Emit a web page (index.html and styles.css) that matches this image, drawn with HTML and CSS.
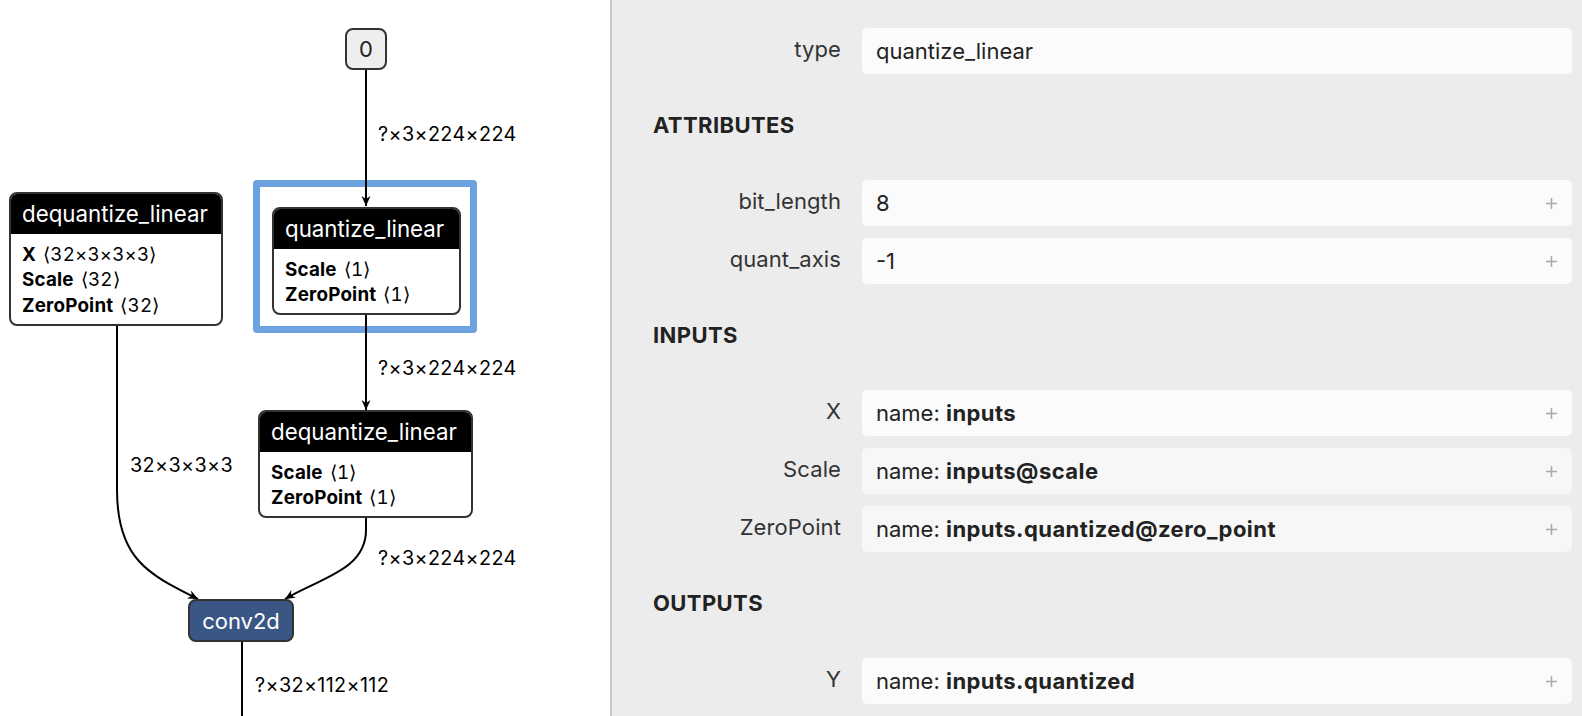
FILE: index.html
```html
<!DOCTYPE html>
<html>
<head>
<meta charset="utf-8">
<link rel="stylesheet" href="styles.css">
</head>
<body>
<div class="app">
  <div class="graph">
    <div class="selection"></div>
    <svg class="edges" width="610" height="716" viewBox="0 0 610 716">
      <defs>
        <marker id="arrow" viewBox="0 0 10 10" refX="10" refY="5" markerWidth="10" markerHeight="10" markerUnits="userSpaceOnUse" orient="auto">
          <path d="M0,0.5 L10,5 L0,9.5 L3,5 Z" fill="#000"/>
        </marker>
      </defs>
      <path class="edge" d="M366,70 L366,206" marker-end="url(#arrow)"/>
      <path class="edge" d="M366,313 L366,410" marker-end="url(#arrow)"/>
      <path class="edge" d="M117,325 L117,490 C117,560 150,575 198,599" marker-end="url(#arrow)"/>
      <path class="edge" d="M366,515 L366,530 C366,570 320,578 285,599" marker-end="url(#arrow)"/>
      <path class="edge" d="M242,642 L242,716"/>
      <text class="elabel" x="378" y="141">?×3×224×224</text>
      <text class="elabel" x="378" y="375">?×3×224×224</text>
      <text class="elabel" x="130" y="472">32×3×3×3</text>
      <text class="elabel" x="378" y="565">?×3×224×224</text>
      <text class="elabel" x="255" y="692">?×32×112×112</text>
    </svg>
    <div class="node n-input"><span>0</span></div>
    <div class="node n-quant">
      <div class="node-head">quantize_linear</div>
      <div class="node-body">
        <div><b>Scale</b><span class="sh">⟨1⟩</span></div>
        <div><b>ZeroPoint</b><span class="sh">⟨1⟩</span></div>
      </div>
    </div>
    <div class="node n-deq-left">
      <div class="node-head">dequantize_linear</div>
      <div class="node-body">
        <div><b>X</b><span class="sh">⟨32×3×3×3⟩</span></div>
        <div><b>Scale</b><span class="sh">⟨32⟩</span></div>
        <div><b>ZeroPoint</b><span class="sh">⟨32⟩</span></div>
      </div>
    </div>
    <div class="node n-deq-mid">
      <div class="node-head">dequantize_linear</div>
      <div class="node-body">
        <div><b>Scale</b><span class="sh">⟨1⟩</span></div>
        <div><b>ZeroPoint</b><span class="sh">⟨1⟩</span></div>
      </div>
    </div>
    <div class="node n-conv"><span>conv2d</span></div>
  </div>

  <div class="sidebar">
    <div class="group">
      <div class="row"><div class="label">type</div><div class="value"><span>quantize_linear</span></div></div>
    </div>
    <div class="heading">ATTRIBUTES</div>
    <div class="group">
      <div class="row"><div class="label">bit_length</div><div class="value"><span>8</span><svg class="plus" width="11" height="11" viewBox="0 0 11 11"><path d="M5.5 0V11M0 5.5H11"/></svg></div></div>
      <div class="row"><div class="label">quant_axis</div><div class="value"><span>-1</span><svg class="plus" width="11" height="11" viewBox="0 0 11 11"><path d="M5.5 0V11M0 5.5H11"/></svg></div></div>
    </div>
    <div class="heading">INPUTS</div>
    <div class="group">
      <div class="row"><div class="label">X</div><div class="value"><span>name: <b>inputs</b></span><svg class="plus" width="11" height="11" viewBox="0 0 11 11"><path d="M5.5 0V11M0 5.5H11"/></svg></div></div>
      <div class="row"><div class="label">Scale</div><div class="value alt"><span>name: <b>inputs@scale</b></span><svg class="plus" width="11" height="11" viewBox="0 0 11 11"><path d="M5.5 0V11M0 5.5H11"/></svg></div></div>
      <div class="row"><div class="label">ZeroPoint</div><div class="value alt"><span>name: <b>inputs.quantized@zero_point</b></span><svg class="plus" width="11" height="11" viewBox="0 0 11 11"><path d="M5.5 0V11M0 5.5H11"/></svg></div></div>
    </div>
    <div class="heading">OUTPUTS</div>
    <div class="group">
      <div class="row"><div class="label">Y</div><div class="value"><span>name: <b>inputs.quantized</b></span><svg class="plus" width="11" height="11" viewBox="0 0 11 11"><path d="M5.5 0V11M0 5.5H11"/></svg></div></div>
    </div>
  </div>
</div>
</body>
</html>
```

FILE: styles.css
```css
* { box-sizing: border-box; }
html, body {
  margin: 0;
  padding: 0;
  width: 1582px;
  height: 716px;
  overflow: hidden;
  font-family: Inter, "Noto Sans", sans-serif;
}
.app {
  display: flex;
  width: 1582px;
  height: 716px;
}

/* ---------- graph canvas ---------- */
.graph {
  position: relative;
  width: 610px;
  height: 716px;
  flex: none;
  background: #fff;
  overflow: hidden;
}
.edges {
  position: absolute;
  left: 0;
  top: 0;
}
.edge {
  fill: none;
  stroke: #000;
  stroke-width: 2;
}
.elabel {
  font-family: Inter, sans-serif;
  font-size: 19.8px;
  letter-spacing: 0.35px;
  fill: #000;
}
.selection {
  position: absolute;
  left: 253px;
  top: 180px;
  width: 224px;
  height: 153px;
  border: 7px solid #6ca2e0;
  border-radius: 4px;
}
.node {
  position: absolute;
  border: 2px solid #333;
  border-radius: 8px;
  overflow: hidden;
  background: #fff;
  color: #000;
}
.node-head {
  height: 40px;
  line-height: 40px;
  background: #000;
  color: #fff;
  font-size: 22.3px;
  padding-left: 11px;
  white-space: nowrap;
}
.node-body {
  padding: 7.5px 0 5px 11px;
  font-size: 18.8px;
  line-height: 25.8px;
  white-space: nowrap;
}
.node-body b {
  font-weight: 700;
  letter-spacing: 0.2px;
}
.sh {
  margin-left: 7px;
  font-variant-numeric: tabular-nums;
  letter-spacing: 0.2px;
}
.n-input {
  left: 345px;
  top: 28px;
  width: 42px;
  height: 42px;
  background: #eee;
  display: flex;
  align-items: center;
  justify-content: center;
  font-size: 22px;
  color: #222;
}
.n-quant { left: 272px; top: 207px; width: 189px; }
.n-deq-left { left: 9px; top: 192px; width: 214px; }
.n-deq-mid { left: 258px; top: 410px; width: 215px; }
.n-conv {
  left: 188px;
  top: 599px;
  width: 106px;
  height: 43px;
  background: #3a5684;
  color: #fff;
  font-size: 22px;
  display: flex;
  align-items: center;
  justify-content: center;
}

/* ---------- sidebar ---------- */
.sidebar {
  flex: 1;
  background: #ececec;
  border-left: 2px solid #c8c8c8;
  padding: 28px 10px 0 0;
  color: #222;
  font-size: 22px;
}
.group {
  display: flex;
  flex-direction: column;
  gap: 12px;
}
.row {
  display: grid;
  grid-template-columns: 229px 1fr;
  column-gap: 21px;
}
.label {
  text-align: right;
  line-height: 42px;
  height: 46px;
  color: #333;
  white-space: nowrap;
  letter-spacing: 0.1px;
}
.value {
  height: 46px;
  background: #fbfbfb;
  border-radius: 5px;
  display: flex;
  align-items: center;
  justify-content: space-between;
  padding: 0 15px 0 14px;
  white-space: nowrap;
}
.value.alt { background: #f7f7f7; }
.value b {
  font-weight: 700;
  letter-spacing: 0.45px;
}
.plus path {
  stroke: #a9a9a9;
  stroke-width: 1.5;
  fill: none;
}
.heading {
  height: 26px;
  line-height: 26px;
  margin: 38px 0 42px;
  padding-left: 41px;
  font-weight: 700;
  font-size: 22px;
  letter-spacing: 0.4px;
  color: #222;
}
```
